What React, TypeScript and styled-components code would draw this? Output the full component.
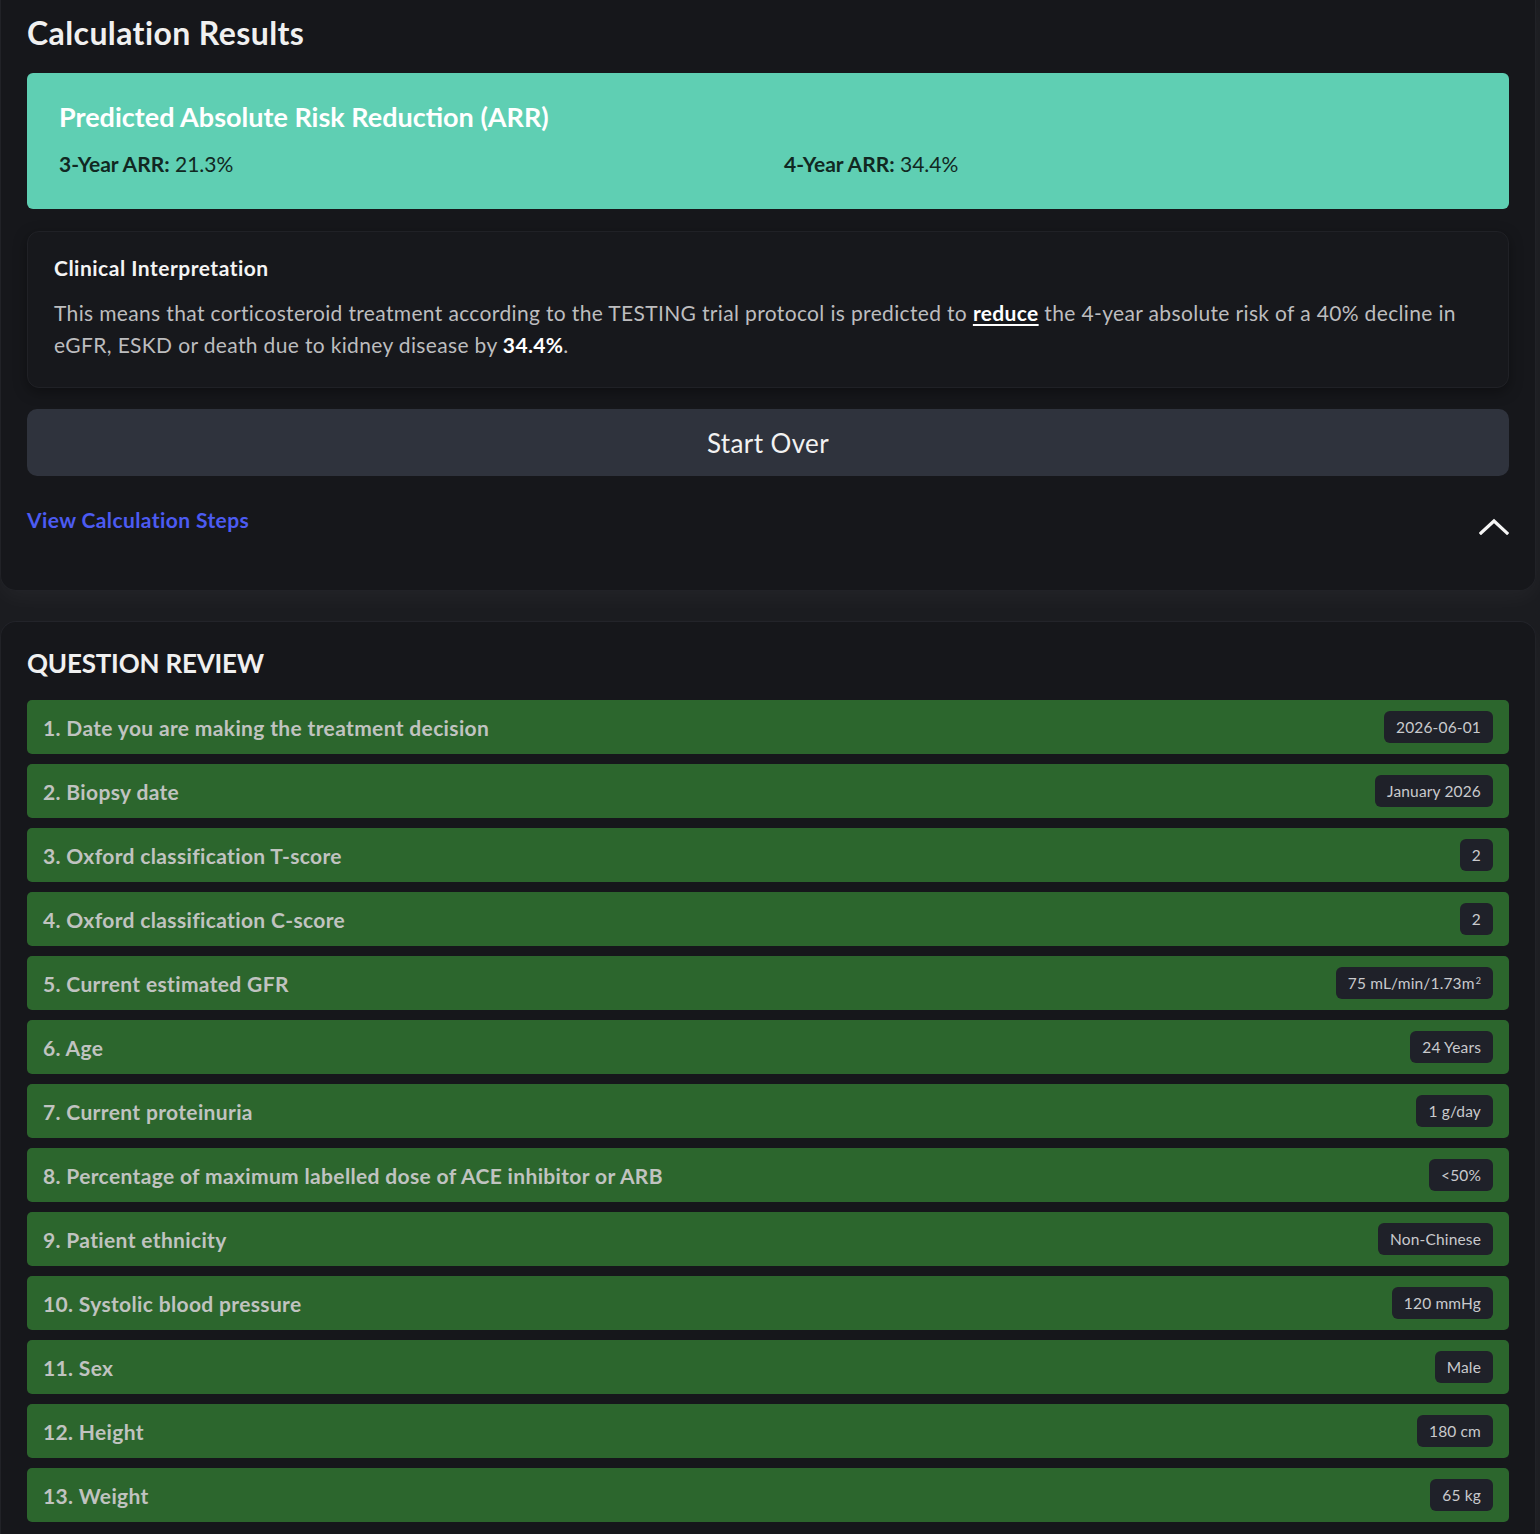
import React from "react";
import styled, { createGlobalStyle } from "styled-components";

const Global = createGlobalStyle`
  html, body {
    margin: 0;
    padding: 0;
    background: #1b1c20;
    font-family: Lato, "Noto Sans", sans-serif;
    color: #f2f2f2;
  }
`;

const Page = styled.div`
  width: 1536px;
  display: flex;
  flex-direction: column;
  gap: 30px;
`;

const Card = styled.section<{ $top?: boolean }>`
  background: #16171b;
  border: 1px solid #212227;
  border-top: ${(p) => (p.$top ? "none" : "1px solid #23242a")};
  border-radius: ${(p) => (p.$top ? "0 0 16px 16px" : "16px 16px 0 0")};
  box-shadow: 0 8px 22px rgba(255, 255, 255, 0.035);
  padding: ${(p) => (p.$top ? "14px 26px 55px 26px" : "25px 26px 13px 26px")};
  display: flex;
  flex-direction: column;
`;

const PageTitle = styled.h1`
  margin: 0 0 21px;
  font-size: 32px;
  line-height: 38px;
  font-weight: 700;
  letter-spacing: 0.4px;
  color: #f0f0f0;
`;

const ResultBox = styled.div`
  background: #5fcfb3;
  border-radius: 6px;
  padding: 27px 32px 31px;
`;

const ResultTitle = styled.h2`
  margin: 0 0 16px;
  font-size: 27px;
  line-height: 34px;
  font-weight: 700;
  color: #ffffff;
`;

const ResultGrid = styled.div`
  display: grid;
  grid-template-columns: 1fr 1fr;
  column-gap: 32px;
`;

const ResultItem = styled.div`
  font-size: 21px;
  line-height: 28px;
  color: #112822;
  b {
    font-weight: 700;
  }
`;

const Interpretation = styled.div`
  margin-top: 22px;
  background: #17181c;
  border: 1px solid #202126;
  border-radius: 12px;
  box-shadow: 0 4px 14px rgba(0, 0, 0, 0.35);
  padding: 22px 26px 26px;
`;

const InterpTitle = styled.h3`
  margin: 0 0 15px;
  font-size: 21px;
  line-height: 28px;
  font-weight: 700;
  letter-spacing: 0.5px;
  color: #f4f4f4;
`;

const InterpText = styled.p`
  margin: 0;
  font-size: 21px;
  line-height: 32px;
  letter-spacing: 0.35px;
  color: #bdbdbf;
  strong {
    color: #ffffff;
    font-weight: 700;
  }
  u {
    color: #ffffff;
    font-weight: 700;
    text-decoration: underline;
    text-underline-offset: 3px;
  }
`;

const StartButton = styled.button`
  margin-top: 21px;
  height: 67px;
  width: 100%;
  border: none;
  border-radius: 10px;
  background: #2f333d;
  color: #f2f2f2;
  font-family: Lato, "Noto Sans", sans-serif;
  font-size: 26px;
  font-weight: 400;
  letter-spacing: 0.4px;
  cursor: pointer;
`;

const StepsRow = styled.div`
  margin-top: 30px;
  display: flex;
  justify-content: space-between;
  align-items: flex-start;
`;

const StepsLink = styled.a`
  font-size: 21px;
  line-height: 28px;
  font-weight: 700;
  letter-spacing: 0.4px;
  color: #4c5bf2;
  text-decoration: none;
  cursor: pointer;
`;

const Chevron = styled.svg`
  margin-top: 11px;
  width: 30px;
  height: 18px;
`;

const SectionTitle = styled.h2`
  margin: 0 0 21px;
  font-size: 26px;
  line-height: 32px;
  font-weight: 700;
  letter-spacing: -0.2px;
  color: #f0f0f0;
`;

const RowList = styled.div`
  display: flex;
  flex-direction: column;
  gap: 10px;
`;

const Row = styled.div`
  height: 54px;
  box-sizing: border-box;
  background: #2c662d;
  border-radius: 5px;
  padding: 0 16px;
  display: flex;
  align-items: center;
  justify-content: space-between;
`;

const RowLabel = styled.span`
  font-size: 21px;
  font-weight: 700;
  letter-spacing: 0.35px;
  color: #c0c3c0;
`;

const Badge = styled.span`
  height: 32px;
  box-sizing: border-box;
  display: inline-flex;
  align-items: center;
  padding: 0 12px;
  border-radius: 6px;
  background: #1f2129;
  color: #c9cacd;
  font-size: 15.5px;
  letter-spacing: 0.15px;
  sup {
    font-size: 9px;
    line-height: 0;
    position: relative;
    top: -2px;
    margin-left: 1px;
  }
`;

type Q = { label: string; value: React.ReactNode };

const questions: Q[] = [
  { label: "1. Date you are making the treatment decision", value: "2026-06-01" },
  { label: "2. Biopsy date", value: "January 2026" },
  { label: "3. Oxford classification T-score", value: "2" },
  { label: "4. Oxford classification C-score", value: "2" },
  {
    label: "5. Current estimated GFR",
    value: (
      <>
        75 mL/min/1.73m<sup>2</sup>
      </>
    ),
  },
  { label: "6. Age", value: "24 Years" },
  { label: "7. Current proteinuria", value: "1 g/day" },
  { label: "8. Percentage of maximum labelled dose of ACE inhibitor or ARB", value: "<50%" },
  { label: "9. Patient ethnicity", value: "Non-Chinese" },
  { label: "10. Systolic blood pressure", value: "120 mmHg" },
  { label: "11. Sex", value: "Male" },
  { label: "12. Height", value: "180 cm" },
  { label: "13. Weight", value: "65 kg" },
];

export default function App() {
  return (
    <>
      <Global />
      <Page>
        <Card $top>
          <PageTitle>Calculation Results</PageTitle>
          <ResultBox>
            <ResultTitle>Predicted Absolute Risk Reduction (ARR)</ResultTitle>
            <ResultGrid>
              <ResultItem>
                <b>3-Year ARR:</b> 21.3%
              </ResultItem>
              <ResultItem>
                <b>4-Year ARR:</b> 34.4%
              </ResultItem>
            </ResultGrid>
          </ResultBox>
          <Interpretation>
            <InterpTitle>Clinical Interpretation</InterpTitle>
            <InterpText>
              This means that corticosteroid treatment according to the TESTING trial protocol is predicted to{" "}
              <u>reduce</u> the 4-year absolute risk of a 40% decline in eGFR, ESKD or death due to kidney disease by{" "}
              <strong>34.4%</strong>.
            </InterpText>
          </Interpretation>
          <StartButton>Start Over</StartButton>
          <StepsRow>
            <StepsLink>View Calculation Steps</StepsLink>
            <Chevron viewBox="0 0 30 18" fill="none">
              <polyline
                points="2,16 15,4 28,16"
                stroke="#f5f5f5"
                strokeWidth="3.2"
                strokeLinecap="square"
                strokeLinejoin="miter"
              />
            </Chevron>
          </StepsRow>
        </Card>
        <Card>
          <SectionTitle>QUESTION REVIEW</SectionTitle>
          <RowList>
            {questions.map((q) => (
              <Row key={q.label}>
                <RowLabel>{q.label}</RowLabel>
                <Badge>{q.value}</Badge>
              </Row>
            ))}
          </RowList>
        </Card>
      </Page>
    </>
  );
}
